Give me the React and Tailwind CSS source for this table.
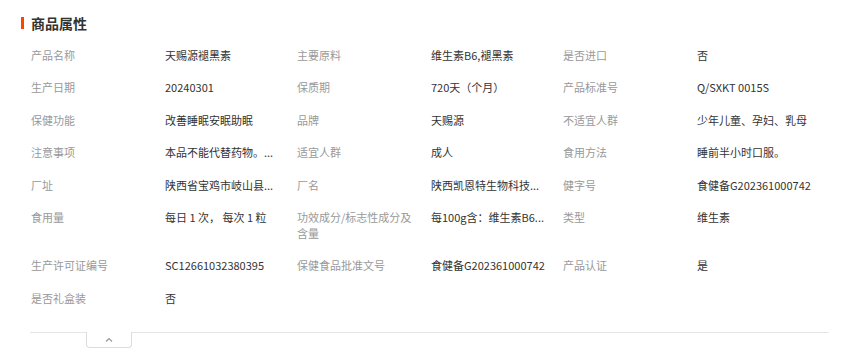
import React from 'react';

const rows = [
  ['产品名称', '天赐源褪黑素', '主要原料', '维生素B6,褪黑素', '是否进口', '否'],
  ['生产日期', '20240301', '保质期', '720天（个月）', '产品标准号', 'Q/SXKT 0015S'],
  ['保健功能', '改善睡眠安眠助眠', '品牌', '天赐源', '不适宜人群', '少年儿童、孕妇、乳母'],
  ['注意事项', '本品不能代替药物。...', '适宜人群', '成人', '食用方法', '睡前半小时口服。'],
  ['厂址', '陕西省宝鸡市岐山县...', '厂名', '陕西凯恩特生物科技...', '健字号', '食健备G202361000742'],
  ['食用量', '每日 1 次， 每次 1 粒', '功效成分/标志性成分及含量', '每100g含：维生素B6...', '类型', '维生素'],
  ['生产许可证编号', 'SC12661032380395', '保健食品批准文号', '食健备G202361000742', '产品认证', '是'],
  ['是否礼盒装', '否'],
];

const Cell = ({ label, value }) => (
  <div className="flex w-[266px] items-start">
    <div className="w-[134px] shrink-0 pr-[14px] text-[#999]">{label}</div>
    <div className="w-[132px] whitespace-nowrap text-[#333]">{value}</div>
  </div>
);

export default function App() {
  return (
    <div
      className="w-[849px] h-[361px] bg-white pl-[21px] pr-[20px] pt-[16px] text-[11px] leading-[16px]"
      style={{ fontFamily: '"Noto Sans CJK SC", "Liberation Sans", sans-serif' }}
    >
      <div className="flex items-center h-[14px]">
        <span className="w-[3px] h-[12px] bg-[#ff4400]" />
        <h2 className="ml-[7px] text-[14px] leading-[14px] font-bold text-[#333]">商品属性</h2>
      </div>

      <div className="pl-[10px] pt-[17px] flex flex-col gap-y-[16.4px]">
        {rows.map((r, i) => (
          <div key={i} className="flex items-start">
            <Cell label={r[0]} value={r[1]} />
            {r[2] && <Cell label={r[2]} value={r[3]} />}
            {r[4] && <Cell label={r[4]} value={r[5]} />}
          </div>
        ))}
      </div>

      <div className="ml-[9px] mt-[26px] flex items-start">
        <div className="w-[56px] border-t border-[#e5e5e5]" />
        <button className="w-[46px] h-[16px] flex items-center justify-center border border-t-0 border-[#dcdcdc] rounded-b-[4px] bg-white">
          <svg width="8" height="5" viewBox="0 0 8 5" fill="none">
            <polyline points="1,4.5 4,1.5 7,4.5" stroke="#999" strokeWidth="1.2" />
          </svg>
        </button>
        <div className="flex-1 border-t border-[#e5e5e5]" />
      </div>
    </div>
  );
}
